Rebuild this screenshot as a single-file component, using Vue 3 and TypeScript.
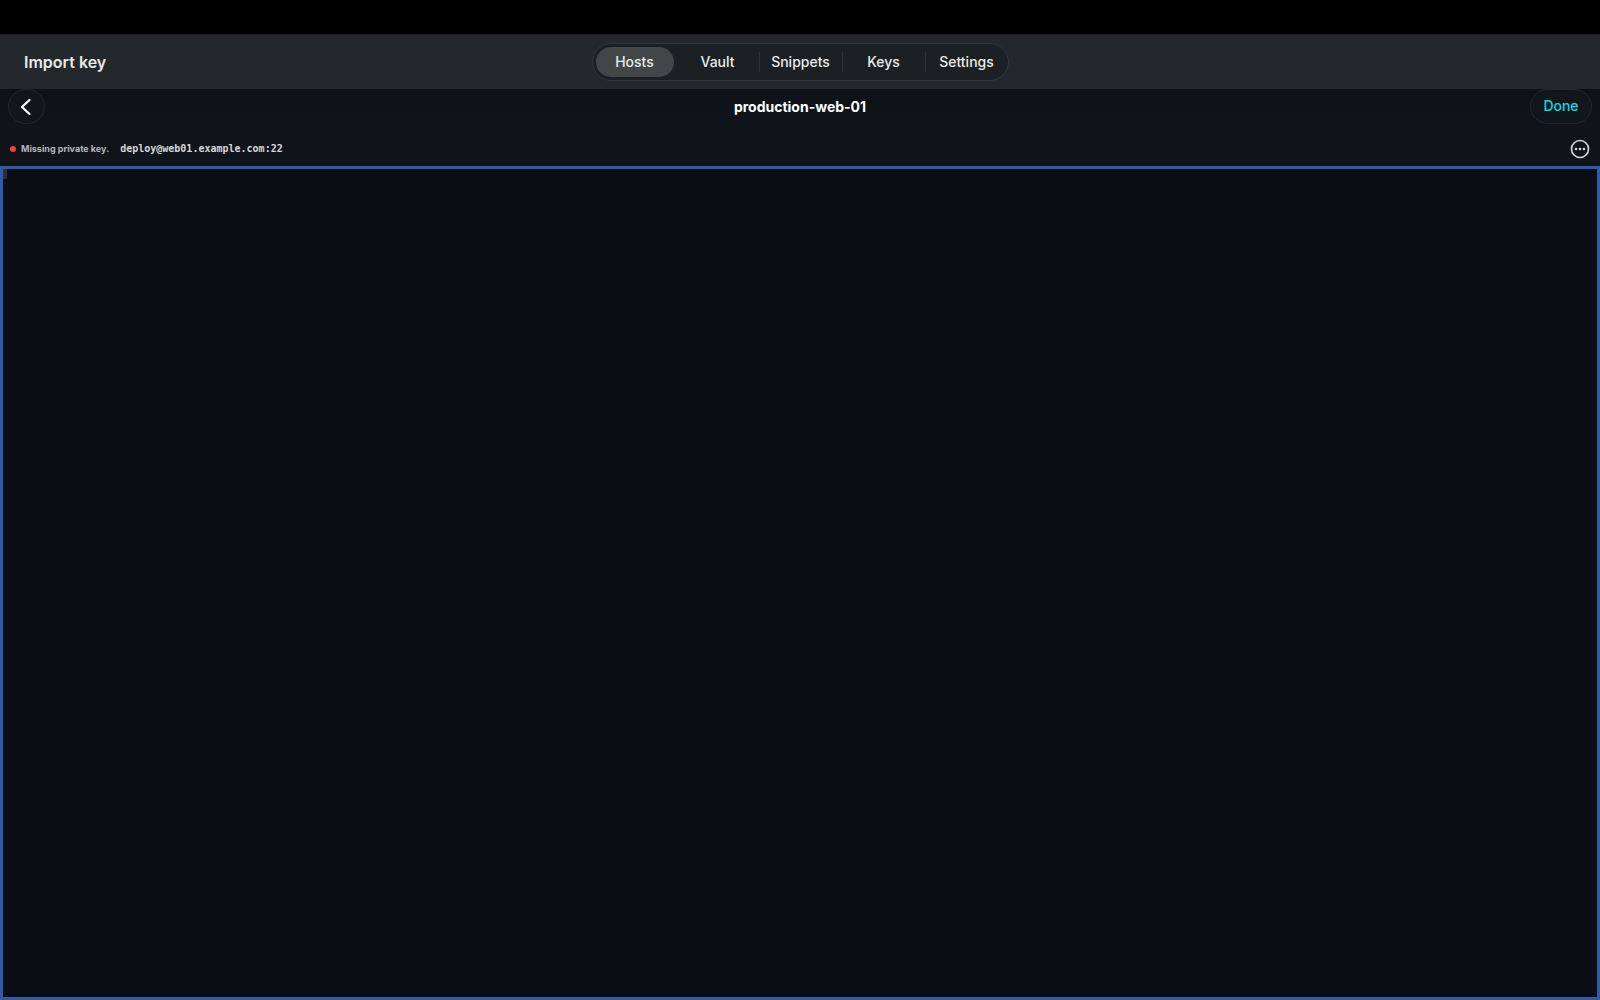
<script setup lang="ts">
import { ref } from 'vue'

const tabs: string[] = ['Hosts', 'Vault', 'Snippets', 'Keys', 'Settings']
const active = ref<string>('Hosts')
</script>

<template>
  <div class="app">
    <div class="notch"></div>
    <header class="toolbar">
      <h1 class="window-title">Import key</h1>
      <nav class="tabs">
        <button
          v-for="tab in tabs"
          :key="tab"
          type="button"
          class="tab"
          :class="{ active: tab === active }"
          @click="active = tab"
        >
          <span class="pill">{{ tab }}</span>
        </button>
      </nav>
    </header>
    <section class="session-bar">
      <button type="button" class="round back" aria-label="Back">
        <svg width="12" height="18" viewBox="0 0 12 18" fill="none" stroke="#fff" stroke-width="2.3" stroke-linecap="round" stroke-linejoin="round">
          <path d="M9.5 2 L2 9 L9.5 16" />
        </svg>
      </button>
      <h2 class="host">production-web-01</h2>
      <button type="button" class="round done">Done</button>
    </section>
    <section class="status">
      <span class="dot"></span>
      <span class="message">Missing private key.</span>
      <span class="address">deploy@web01.example.com:22</span>
      <button type="button" class="more" aria-label="More">
        <svg width="20" height="20" viewBox="0 0 20 20" fill="none">
          <circle cx="10" cy="10" r="8.5" stroke="#d3d5d7" stroke-width="1.7" />
          <circle cx="6" cy="10" r="1.3" fill="#d3d5d7" />
          <circle cx="10" cy="10" r="1.3" fill="#d3d5d7" />
          <circle cx="14" cy="10" r="1.3" fill="#d3d5d7" />
        </svg>
      </button>
    </section>
    <main class="terminal" tabindex="0">
      <div class="cursor"></div>
    </main>
  </div>
</template>

<style>
body {
  margin: 0;
  background: #0f141b;
}
</style>

<style scoped>
.app {
  display: flex;
  flex-direction: column;
  min-height: 100vh;
  background: #0f141b;
  color: #fff;
  font-family: Inter, "Liberation Sans", sans-serif;
}
button {
  margin: 0;
  padding: 0;
  border: 0;
  background: none;
  color: inherit;
  font: inherit;
}
h1,
h2 {
  margin: 0;
}
.notch {
  height: 34px;
  background: #000;
}
.toolbar {
  display: grid;
  grid-template-columns: 1fr auto 1fr;
  align-items: center;
  height: 55px;
  box-sizing: border-box;
  border-top: 1px solid #1c1f20;
  background: #23282a;
}
.window-title {
  padding-left: 24px;
  font-size: 16px;
  line-height: 20px;
  font-weight: 600;
  color: #e8eaea;
}
.tabs {
  display: flex;
  box-sizing: border-box;
  height: 38px;
  border: 1px solid #30383a;
  border-radius: 19px;
  background: #1b2122;
}
.tab {
  position: relative;
  display: flex;
  align-items: center;
  justify-content: center;
  box-sizing: border-box;
  width: 83px;
  padding-left: 1px;
  font-size: 14px;
  line-height: 20px;
  font-weight: 500;
  color: #e9ebeb;
}
.tab:nth-child(n + 3)::before {
  content: "";
  position: absolute;
  left: 0;
  top: 8px;
  width: 1px;
  height: 20px;
  background: #2d3436;
}
.pill {
  width: 78px;
  padding: 5px 0;
  border-radius: 15px;
}
.active .pill {
  background: #414647;
}
.session-bar {
  display: grid;
  grid-template-columns: 1fr auto 1fr;
  align-items: center;
  height: 35px;
  padding: 0 8px;
  background: linear-gradient(#0d1216, #0f141b);
}
.round {
  display: flex;
  align-items: center;
  justify-content: center;
  box-sizing: border-box;
  height: 35px;
  border: 1px solid #22282c;
  border-radius: 18px;
  background: #11161a;
}
.back {
  width: 37px;
  padding-right: 1px;
}
.host {
  font-size: 14px;
  line-height: 20px;
  font-weight: 700;
}
.done {
  justify-self: end;
  width: 62px;
  padding-bottom: 2px;
  font-size: 14px;
  line-height: 20px;
  font-weight: 500;
  color: #0fd9ec;
}
.status {
  display: flex;
  align-items: center;
  box-sizing: border-box;
  height: 42px;
  padding: 8px 10px 0;
}
.dot {
  width: 6px;
  height: 6px;
  border-radius: 50%;
  background: #ff3b3f;
}
.message {
  margin-left: 5px;
  font-size: 9px;
  line-height: 12px;
  font-weight: 700;
  color: #b4b7ba;
}
.address {
  margin-left: 11px;
  font-family: "DejaVu Sans Mono", monospace;
  font-size: 10px;
  line-height: 12px;
  font-weight: 700;
  color: #d4d6d8;
}
.more {
  display: flex;
  margin-left: auto;
}
.terminal {
  flex: 1;
  border: 3px solid #2d5ba8;
  background: #0a0d14;
  outline: none;
}
.cursor {
  width: 4px;
  height: 10px;
  background: #2b2f36;
}
</style>
